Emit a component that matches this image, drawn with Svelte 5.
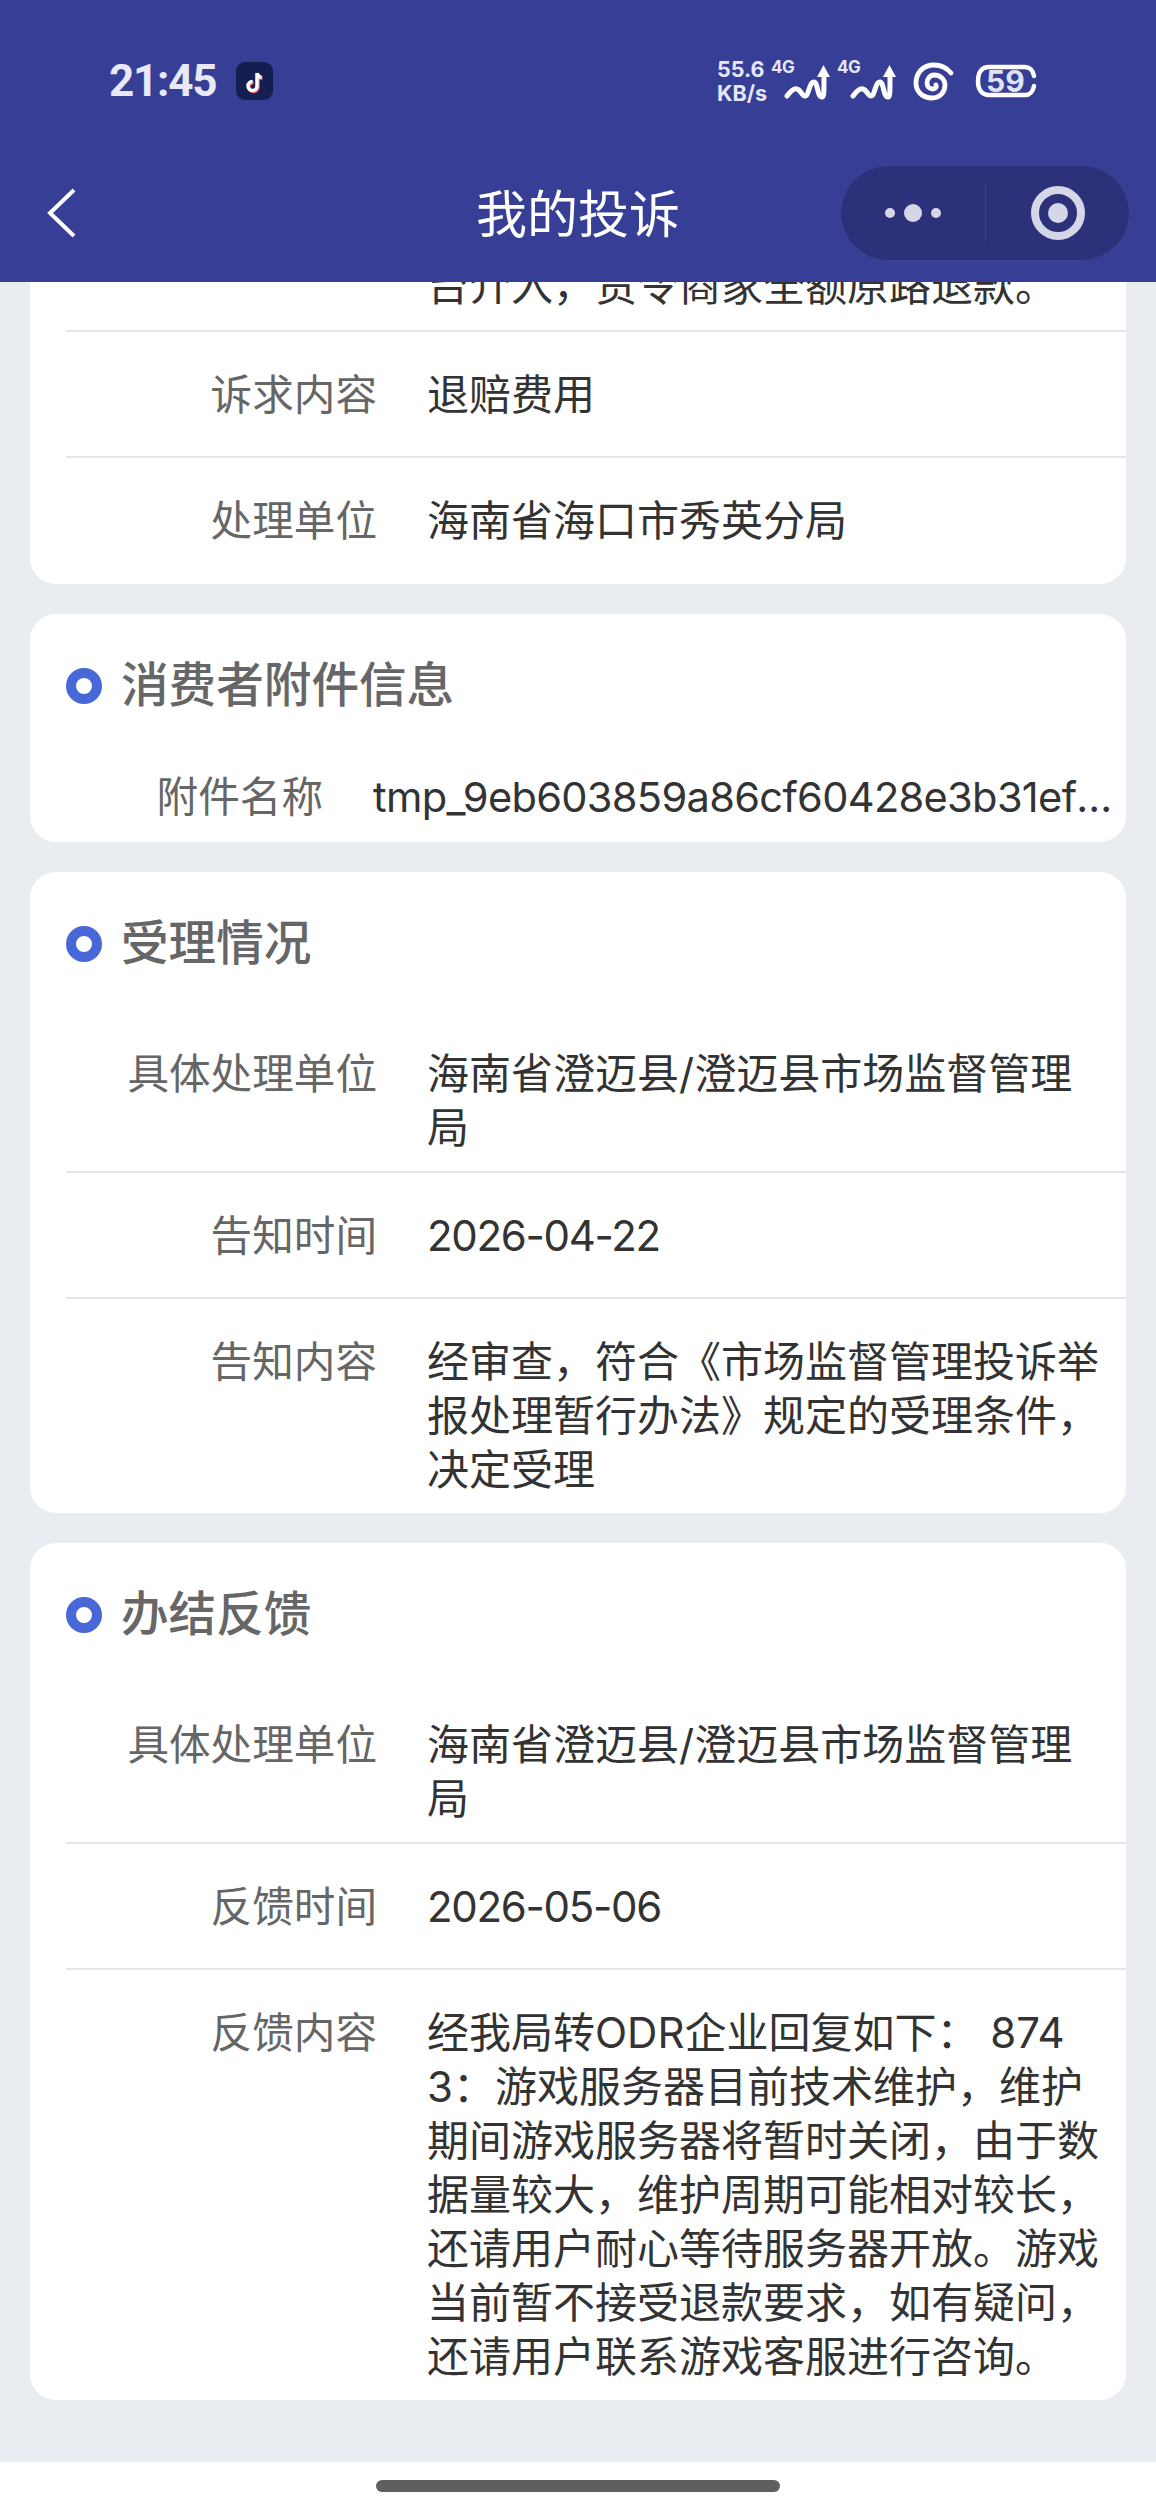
<script>
  const accepted = [
    { label: '具体处理单位', text: '海南省澄迈县/澄迈县市场监督管理局' },
    { label: '告知时间', text: '2026-04-22', latin: true },
    { label: '告知内容', text: '经审查，符合《市场监督管理投诉举报处理暂行办法》规定的受理条件，决定受理' }
  ];
  const feedback = [
    { label: '具体处理单位', text: '海南省澄迈县/澄迈县市场监督管理局' },
    { label: '反馈时间', text: '2026-05-06', latin: true },
    {
      label: '反馈内容',
      text: '经我局转ODR企业回复如下：\u00a08743：游戏服务器目前技术维护，维护期间游戏服务器将暂时关闭，由于数据量较大，维护周期可能相对较长，还请用户耐心等待服务器开放。游戏当前暂不接受退款要求，如有疑问，还请用户联系游戏客服进行咨询。'
    }
  ];
  const squiggle = 'M3 31C6 27 10 23 13 24C17 25 18 31 21 31C25 31 25 17 30 17C34 17 33 32 38 32C40 32 40 30 40 10';
</script>

<div class="phone">
  <header class="top">
    <div class="status">
      <div class="status-left">
        <span class="time">21:45</span>
        <svg class="tiktok" width="37" height="38" viewBox="0 0 37 38">
          <rect width="37" height="38" rx="9" fill="#141e50" />
          <path d="M21 11V24a4.500 4.500 0 1 1-4.500-4.500M21 11c.5 2.500 2 4 4.500 4.500" fill="none" stroke="#e8606a" stroke-width="3.500" transform="translate(1 1)" />
          <path d="M21 11V24a4.500 4.500 0 1 1-4.500-4.500M21 11c.5 2.500 2 4 4.500 4.500" fill="none" stroke="#fff" stroke-width="3.500" />
        </svg>
      </div>
      <div class="status-right">
        <div class="speed"><span>55.6</span><span>KB/s</span></div>
        <div class="net">
          <span class="net-label">4G</span>
          <svg width="47" height="35" viewBox="0 0 47 35">
            <path d={squiggle} fill="none" stroke="#fff" stroke-width="5" stroke-linecap="round" />
            <path d="M39.500 0L46 12H33Z" fill="#fff" />
          </svg>
        </div>
        <div class="net">
          <span class="net-label">4G</span>
          <svg width="47" height="35" viewBox="0 0 47 35">
            <path d={squiggle} fill="none" stroke="#fff" stroke-width="5" stroke-linecap="round" />
            <path d="M39.500 0L46 12H33Z" fill="#fff" />
          </svg>
        </div>
        <svg class="spiral" width="42" height="39" viewBox="0 0 42 39">
          <path d="M38 11C33 5 27 3 21 3C10 3 3 11 3 21C3 30 10 36 19 36C27 36 32 30 32 23C32 17 27 13 21 13C17 13 14 17 14 21C14 25 17 27 20 27C22 27 24 25 23 23" fill="none" stroke="#fff" stroke-width="4.800" stroke-linecap="round" />
        </svg>
        <svg class="battery" width="62" height="36" viewBox="0 0 62 36">
          <path d="M59 13C58 7 54 4 50 4H14C7 4 3 9 3 18C3 27 7 32 14 32H50C54 32 58 29 59 23" fill="none" stroke="#fff" stroke-width="4.500" stroke-linecap="round" />
          <text x="11" y="29" class="battery-num">59</text>
        </svg>
      </div>
    </div>
    <nav class="nav">
      <div class="back">
        <svg width="30" height="50" viewBox="0 0 30 50">
          <path d="M27 2L3 25L27 48" fill="none" stroke="#fff" stroke-width="4" />
        </svg>
      </div>
      <div class="title">我的投诉</div>
      <div class="capsule">
        <div class="more">
          <i class="small"></i><i class="big"></i><i class="small"></i>
        </div>
        <div class="target"><i></i></div>
      </div>
    </nav>
  </header>

  <main class="scroll">
    <section class="card first">
      <div class="row cut">
        <div class="label"></div>
        <div class="value">台介入，责令商家全额原路退款。</div>
      </div>
      <div class="row">
        <div class="label">诉求内容</div>
        <div class="value">退赔费用</div>
      </div>
      <div class="row">
        <div class="label">处理单位</div>
        <div class="value">海南省海口市秀英分局</div>
      </div>
    </section>

    <section class="card">
      <h2><i class="ring"></i><span>消费者附件信息</span></h2>
      <div class="attach">
        <div class="label">附件名称</div>
        <div class="file">tmp_9eb603859a86cf60428e3b31ef6d0a77.jpg</div>
      </div>
    </section>

    <section class="card">
      <h2 class="spaced"><i class="ring"></i><span>受理情况</span></h2>
      {#each accepted as row}
        <div class="row">
          <div class="label">{row.label}</div>
          <div class="value" class:latin={row.latin}>{row.text}</div>
        </div>
      {/each}
    </section>

    <section class="card">
      <h2 class="spaced"><i class="ring"></i><span>办结反馈</span></h2>
      {#each feedback as row}
        <div class="row">
          <div class="label">{row.label}</div>
          <div class="value" class:latin={row.latin}>{row.text}</div>
        </div>
      {/each}
    </section>
  </main>

  <footer class="home"><span class="pill"></span></footer>
</div>

<style>
  :global(body) {
    margin: 0;
    background: #fff;
  }
  .phone {
    display: flex;
    flex-direction: column;
    width: 1156px;
    height: 2510px;
    overflow: hidden;
    font-family: 'Inter', 'Noto Sans CJK SC', sans-serif;
  }
  .top {
    flex: none;
    height: 282px;
    background: #373e95;
    position: relative;
    z-index: 1;
  }
  .status {
    display: flex;
    align-items: center;
    justify-content: space-between;
    height: 162px;
    padding: 0 119px 0 109px;
  }
  .status-left {
    display: flex;
    align-items: center;
    gap: 20px;
  }
  .time {
    font-family: 'Roboto', sans-serif;
    font-size: 44px;
    font-weight: 700;
    letter-spacing: -1.200px;
    color: #e8e8f6;
  }
  .status-right {
    display: flex;
    align-items: center;
  }
  .speed {
    display: flex;
    flex-direction: column;
    width: 54px;
    font-size: 21.500px;
    line-height: 24px;
    font-weight: 700;
    color: #e6e7f6;
  }
  .net {
    position: relative;
    display: flex;
    justify-content: flex-end;
    width: 60px;
    margin-right: 6px;
    padding-top: 3px;
  }
  .net-label {
    position: absolute;
    left: 0;
    top: -5px;
    font-size: 17px;
    font-weight: 700;
    letter-spacing: -0.500px;
    color: #e6e7f6;
  }
  .spiral {
    margin-left: 10px;
  }
  .battery {
    margin-left: 20px;
  }
  .battery-num {
    font-family: 'Inter', sans-serif;
    font-size: 30px;
    font-weight: 700;
    fill: #dfe1f4;
  }
  .nav {
    display: grid;
    grid-template-columns: 1fr auto 1fr;
    align-items: center;
    height: 102px;
  }
  .back {
    display: flex;
    padding-left: 47px;
  }
  .title {
    padding-bottom: 5px;
    font-family: 'Noto Sans CJK SC', sans-serif;
    font-size: 51px;
    color: #fff;
  }
  .capsule {
    justify-self: end;
    display: flex;
    align-items: center;
    box-sizing: border-box;
    width: 290px;
    height: 96px;
    margin-right: 26px;
    border: 1px solid #3d4391;
    border-radius: 48px;
    background: #2d3179;
  }
  .more {
    display: flex;
    align-items: center;
    justify-content: center;
    gap: 9px;
    width: 144px;
    height: 58px;
    border-right: 1px solid #3d4391;
  }
  .more i {
    border-radius: 50%;
    background: #d5d7e8;
  }
  .more .small {
    width: 10px;
    height: 10px;
  }
  .more .big {
    width: 18px;
    height: 18px;
  }
  .target {
    flex: 1;
    display: flex;
    justify-content: center;
  }
  .target i {
    display: flex;
    align-items: center;
    justify-content: center;
    box-sizing: border-box;
    width: 54px;
    height: 54px;
    border: 8px solid #d5d7e8;
    border-radius: 50%;
  }
  .target i::after {
    content: '';
    width: 20px;
    height: 20px;
    border-radius: 50%;
    background: #d5d7e8;
  }
  .scroll {
    flex: 1;
    min-height: 0;
    overflow: hidden;
    display: flex;
    flex-direction: column;
    gap: 30px;
    background: #e9ecf1;
  }
  .card {
    flex: none;
    margin: 0 30px;
    background: #fff;
    border-radius: 26px;
    font-size: 41.600px;
    line-height: 54px;
  }
  .card.first {
    margin-top: -23px;
    border-radius: 0 0 26px 26px;
  }
  h2 {
    display: flex;
    align-items: center;
    gap: 19px;
    height: 54px;
    margin: 0;
    padding: 45px 0 0 36px;
    font-family: 'Noto Sans CJK SC', sans-serif;
    font-size: 47.600px;
    font-weight: 500;
    color: #666;
  }
  h2 span {
    padding-bottom: 8px;
  }
  h2.spaced {
    margin-bottom: 40px;
  }
  .ring {
    flex: none;
    box-sizing: border-box;
    width: 36px;
    height: 36px;
    border: 10px solid #4868d8;
    border-radius: 50%;
  }
  .row {
    display: flex;
    gap: 50px;
    box-sizing: border-box;
    min-height: 126px;
    margin-left: 36px;
    padding: 36px 0 16px;
    border-bottom: 2px solid #e5e5e5;
  }
  .row:last-child {
    border-bottom: 0;
  }
  .row.cut {
    min-height: 0;
    padding: 0 0 17px;
  }
  .label {
    flex: none;
    width: 311px;
    text-align: right;
    color: #666;
  }
  .value {
    width: 680px;
    font-size: 42px;
    color: #333;
    word-break: break-all;
  }
  .latin {
    letter-spacing: -1.300px;
  }
  .attach {
    display: flex;
    gap: 50px;
    margin-left: 36px;
    padding: 57px 6px 18px 0;
  }
  .attach .label {
    width: 257px;
  }
  .file {
    flex: 1;
    min-width: 0;
    overflow: hidden;
    white-space: nowrap;
    text-overflow: ellipsis;
    letter-spacing: -0.700px;
    color: #333;
  }
  .home {
    flex: none;
    display: flex;
    justify-content: center;
    height: 48px;
    padding-top: 18px;
    box-sizing: border-box;
    background: #fff;
  }
  .pill {
    width: 404px;
    height: 12px;
    border-radius: 6px;
    background: #5f5f5f;
  }
</style>
